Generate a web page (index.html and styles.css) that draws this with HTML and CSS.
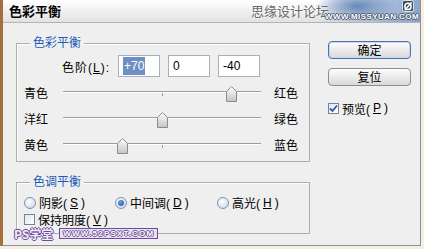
FILE: index.html
```html
<!DOCTYPE html>
<html lang="zh-CN">
<head>
  <meta charset="UTF-8">
  <meta name="viewport" content="width=device-width, initial-scale=1.0">
  <title>色彩平衡</title>
  <link rel="stylesheet" href="styles.css">
</head>
<body>

  <div class="window">
    <div class="titlebar">
      <span class="title">色彩平衡</span>
      <div class="brand">
        <span class="brand-cn">思缘设计论坛</span>
        <span class="brand-en">WWW.MISSYUAN.COM</span>
        <svg class="brand-icon" width="12" height="12" viewBox="0 0 13 13">
          <rect x="0.5" y="0.5" width="12" height="12" rx="2" fill="#3d4b5c" stroke="#e8eef6"/>
          <circle cx="6.5" cy="7" r="3.4" fill="none" stroke="#fff" stroke-width="1.6"/>
          <line x1="3" y1="11" x2="10.5" y2="2.5" stroke="#fff" stroke-width="1.6"/>
        </svg>
      </div>
    </div>

    <div class="main">
      <div class="groups">
        <div class="group group-balance">
          <div class="group-title">色彩平衡</div>
          <div class="levels">
            <span class="levels-label">色阶(<u>L</u>):</span>
            <div class="field"><span class="selected">+70</span></div>
            <div class="field">0</div>
            <div class="field">-40</div>
          </div>

          <div class="slider-row">
            <span class="side-left">青色</span>
            <div class="track">
              <span class="tick"></span>
              <svg class="thumb" style="left: 163px" width="11" height="16" viewBox="0 0 11 16">
                <defs>
                  <linearGradient id="tg1" x1="0" y1="0" x2="0" y2="1">
                    <stop offset="0" stop-color="#ffffff"/>
                    <stop offset="1" stop-color="#c4c4c4"/>
                  </linearGradient>
                </defs>
                <path d="M0.5 15.5 V5.5 L5.5 0.5 L10.5 5.5 V15.5 Z" fill="url(#tg1)" stroke="#8c8c8c"/>
              </svg>
            </div>
            <span class="side-right">红色</span>
          </div>

          <div class="slider-row">
            <span class="side-left">洋红</span>
            <div class="track">
              <span class="tick"></span>
              <svg class="thumb" style="left: 94px" width="11" height="16" viewBox="0 0 11 16">
                <path d="M0.5 15.5 V5.5 L5.5 0.5 L10.5 5.5 V15.5 Z" fill="url(#tg1)" stroke="#8c8c8c"/>
              </svg>
            </div>
            <span class="side-right">绿色</span>
          </div>

          <div class="slider-row">
            <span class="side-left">黄色</span>
            <div class="track">
              <span class="tick"></span>
              <svg class="thumb" style="left: 54px" width="11" height="16" viewBox="0 0 11 16">
                <path d="M0.5 15.5 V5.5 L5.5 0.5 L10.5 5.5 V15.5 Z" fill="url(#tg1)" stroke="#8c8c8c"/>
              </svg>
            </div>
            <span class="side-right">蓝色</span>
          </div>
        </div>

        <div class="group group-tone">
          <div class="group-title">色调平衡</div>
          <div class="radios">
            <label class="radio-item r-shadow"><span class="radio"></span>阴影(<u>S</u>)</label>
            <label class="radio-item r-mid"><span class="radio on"><span class="dot"></span></span>中间调(<u>D</u>)</label>
            <label class="radio-item"><span class="radio"></span>高光(<u>H</u>)</label>
          </div>
          <label class="check keep"><span class="box"></span>保持明度(<u>V</u>)</label>
        </div>
      </div>

      <div class="actions">
        <button class="btn btn-default" type="button">确定</button>
        <button class="btn" type="button">复位</button>
        <label class="check preview">
          <span class="box">
            <svg width="9" height="9" viewBox="0 0 9 9">
              <path d="M1 4.5 L3.5 7 L8 1.5" fill="none" stroke="#2a56b0" stroke-width="1.8"/>
            </svg>
          </span>预览(<u>P</u>)
        </label>
      </div>
    </div>

    <div class="stamp">
      <span class="stamp-cn">PS学堂</span>
      <span class="stamp-en">WWW.52PSXT.COM</span>
    </div>
  </div>

</body>
</html>
```

FILE: styles.css
```css
body {
  margin: 0;
  padding: 0;
  background-color: #f5efe4;
  font-family: "Liberation Sans", "Noto Sans CJK SC", sans-serif;
  font-size: 12px;
  color: #000;
}

.window {
  position: relative;
  width: 421px;
  height: 246px;
  box-sizing: border-box;
  background-color: #efefef;
  border-left: 3px solid #a46f3c;
  border-right: 1px solid #8f8f8f;
  border-bottom: 1px solid #8f8f8f;
  overflow: hidden;
}

.titlebar {
  position: relative;
  height: 22px;
  border-bottom: 1px solid #b4b4b4;
  background: linear-gradient(#ffffff, #e2e2e2);
  display: flex;
  align-items: center;
  padding-left: 6px;
}

.title {
  font-family: "Noto Sans CJK SC", sans-serif;
  font-weight: bold;
  font-size: 13px;
  line-height: 14px;
}

/* watermark in the title bar */
.brand {
  position: absolute;
  top: 0;
  right: 0;
  width: 175px;
  height: 22px;
  background:
    radial-gradient(ellipse 40px 16px at 112px 6px, rgba(70, 110, 170, 0.75), rgba(70, 110, 170, 0) 100%),
    linear-gradient(to right, rgba(120, 150, 195, 0) 40%, rgba(110, 145, 195, 0.8) 100%);
}

.brand-cn {
  position: absolute;
  left: 6px;
  top: 3px;
  font-family: "Noto Sans CJK SC", sans-serif;
  font-size: 13px;
  line-height: 16px;
  color: #6a6a6a;
  text-shadow: 0 0 2px #fff;
}

.brand-en {
  position: absolute;
  left: 80px;
  top: 12px;
  font-family: "Liberation Sans", sans-serif;
  font-weight: bold;
  font-size: 8px;
  line-height: 9px;
  letter-spacing: 0.4px;
  color: #fff;
  text-shadow: 1px 0 0 #4a5a70, -1px 0 0 #4a5a70, 0 1px 0 #4a5a70, 0 -1px 0 #4a5a70;
}

.brand-icon {
  position: absolute;
  right: 6px;
  top: 0;
}

.main {
  display: flex;
  padding-left: 13px;
}

.groups {
  width: 294px;
}

.group {
  box-sizing: border-box;
  border: 1px solid #adadad;
  box-shadow: inset 1px 1px 0 #fff;
}

.group-balance {
  margin-top: 20px;
  height: 119px;
}

.group-tone {
  margin-top: 20px;
  height: 52px;
}

.group-title {
  width: fit-content;
  margin: -8px 0 0 13px;
  padding: 0 3px;
  background-color: #efefef;
  color: #1d5bb9;
  font-size: 12px;
  line-height: 14px;
}

.levels {
  display: flex;
  align-items: center;
  margin-top: 5px;
  gap: 8px;
}

.levels-label {
  width: 93px;
  text-align: right;
  letter-spacing: 1px;
}

.field {
  width: 42px;
  height: 22px;
  box-sizing: border-box;
  border: 1px solid #a9b0b8;
  background-color: #fff;
  padding-left: 4px;
  line-height: 20px;
}

.selected {
  background-color: #6f8fc4;
  color: #fff;
  padding: 2px 1px;
}

.slider-row {
  display: flex;
  align-items: center;
  height: 26px;
  padding-left: 7px;
}

.levels + .slider-row {
  margin-top: 2px;
}

.side-left {
  width: 39px;
}

.side-right {
  margin-left: 13px;
}

.track {
  position: relative;
  width: 198px;
  height: 1px;
  border-top: 1px solid #9c9c9c;
  background-color: #fff;
}

.tick {
  position: absolute;
  left: 99px;
  top: 1px;
  width: 1px;
  height: 3px;
  background-color: #9c9c9c;
}

.thumb {
  position: absolute;
  top: -6px;
}

.radios {
  display: flex;
  align-items: center;
  margin-top: 6px;
  padding-left: 7px;
  height: 15px;
}

.radio-item {
  display: flex;
  align-items: center;
  gap: 3px;
}

.r-shadow {
  width: 91px;
}

.r-mid {
  width: 102px;
}

.radio {
  width: 12px;
  height: 12px;
  box-sizing: border-box;
  border-radius: 50%;
  border: 1px solid #7f94b2;
  background: radial-gradient(circle at 40% 35%, #ffffff, #c4d2e4);
  display: flex;
  align-items: center;
  justify-content: center;
}

.dot {
  width: 6px;
  height: 6px;
  border-radius: 50%;
  background: radial-gradient(circle at 40% 35%, #6c9ee0, #1c4fa6);
}

.check {
  display: flex;
  align-items: center;
  gap: 3px;
}

.keep {
  margin-top: 2px;
  padding-left: 7px;
  height: 15px;
}

.box {
  width: 11px;
  height: 11px;
  box-sizing: border-box;
  border: 1px solid #71839e;
  background: linear-gradient(135deg, #e2e6ec, #ffffff);
  display: flex;
  align-items: center;
  justify-content: center;
}

.actions {
  display: flex;
  flex-direction: column;
  margin-left: 18px;
  padding-top: 18px;
  width: 83px;
}

.btn {
  width: 83px;
  height: 18px;
  padding: 0;
  border: 1px solid #8d8d8d;
  border-radius: 4px;
  background: linear-gradient(#fdfdfd, #d9d9d9);
  font-family: "Noto Sans CJK SC", sans-serif;
  font-size: 12px;
  line-height: 14px;
  color: #000;
}

.btn + .btn {
  margin-top: 9px;
}

.btn-default {
  border-color: #4d72ab;
  box-shadow: inset 0 0 0 1px #c9d8ee;
}

.preview {
  margin-top: 16px;
  height: 12px;
}

/* watermark in the bottom left corner */
.stamp {
  position: absolute;
  left: 11px;
  top: 227px;
  display: flex;
  align-items: center;
  gap: 6px;
}

.stamp-cn {
  font-family: "Noto Sans CJK SC", sans-serif;
  font-weight: bold;
  font-size: 12px;
  line-height: 13px;
  color: #f4eefa;
  text-shadow: 1px 0 0 #6c4c98, -1px 0 0 #6c4c98, 0 1px 0 #6c4c98, 0 -1px 0 #6c4c98;
}

.stamp-en {
  font-family: "Liberation Sans", sans-serif;
  font-weight: bold;
  font-size: 8px;
  line-height: 9px;
  letter-spacing: 1.2px;
  padding: 0 3px;
  color: #fff;
  background-color: #e8e2f0;
  border: 1px solid #6c4c98;
  text-shadow: 1px 0 0 #6c4c98, -1px 0 0 #6c4c98, 0 1px 0 #6c4c98, 0 -1px 0 #6c4c98;
}
```
